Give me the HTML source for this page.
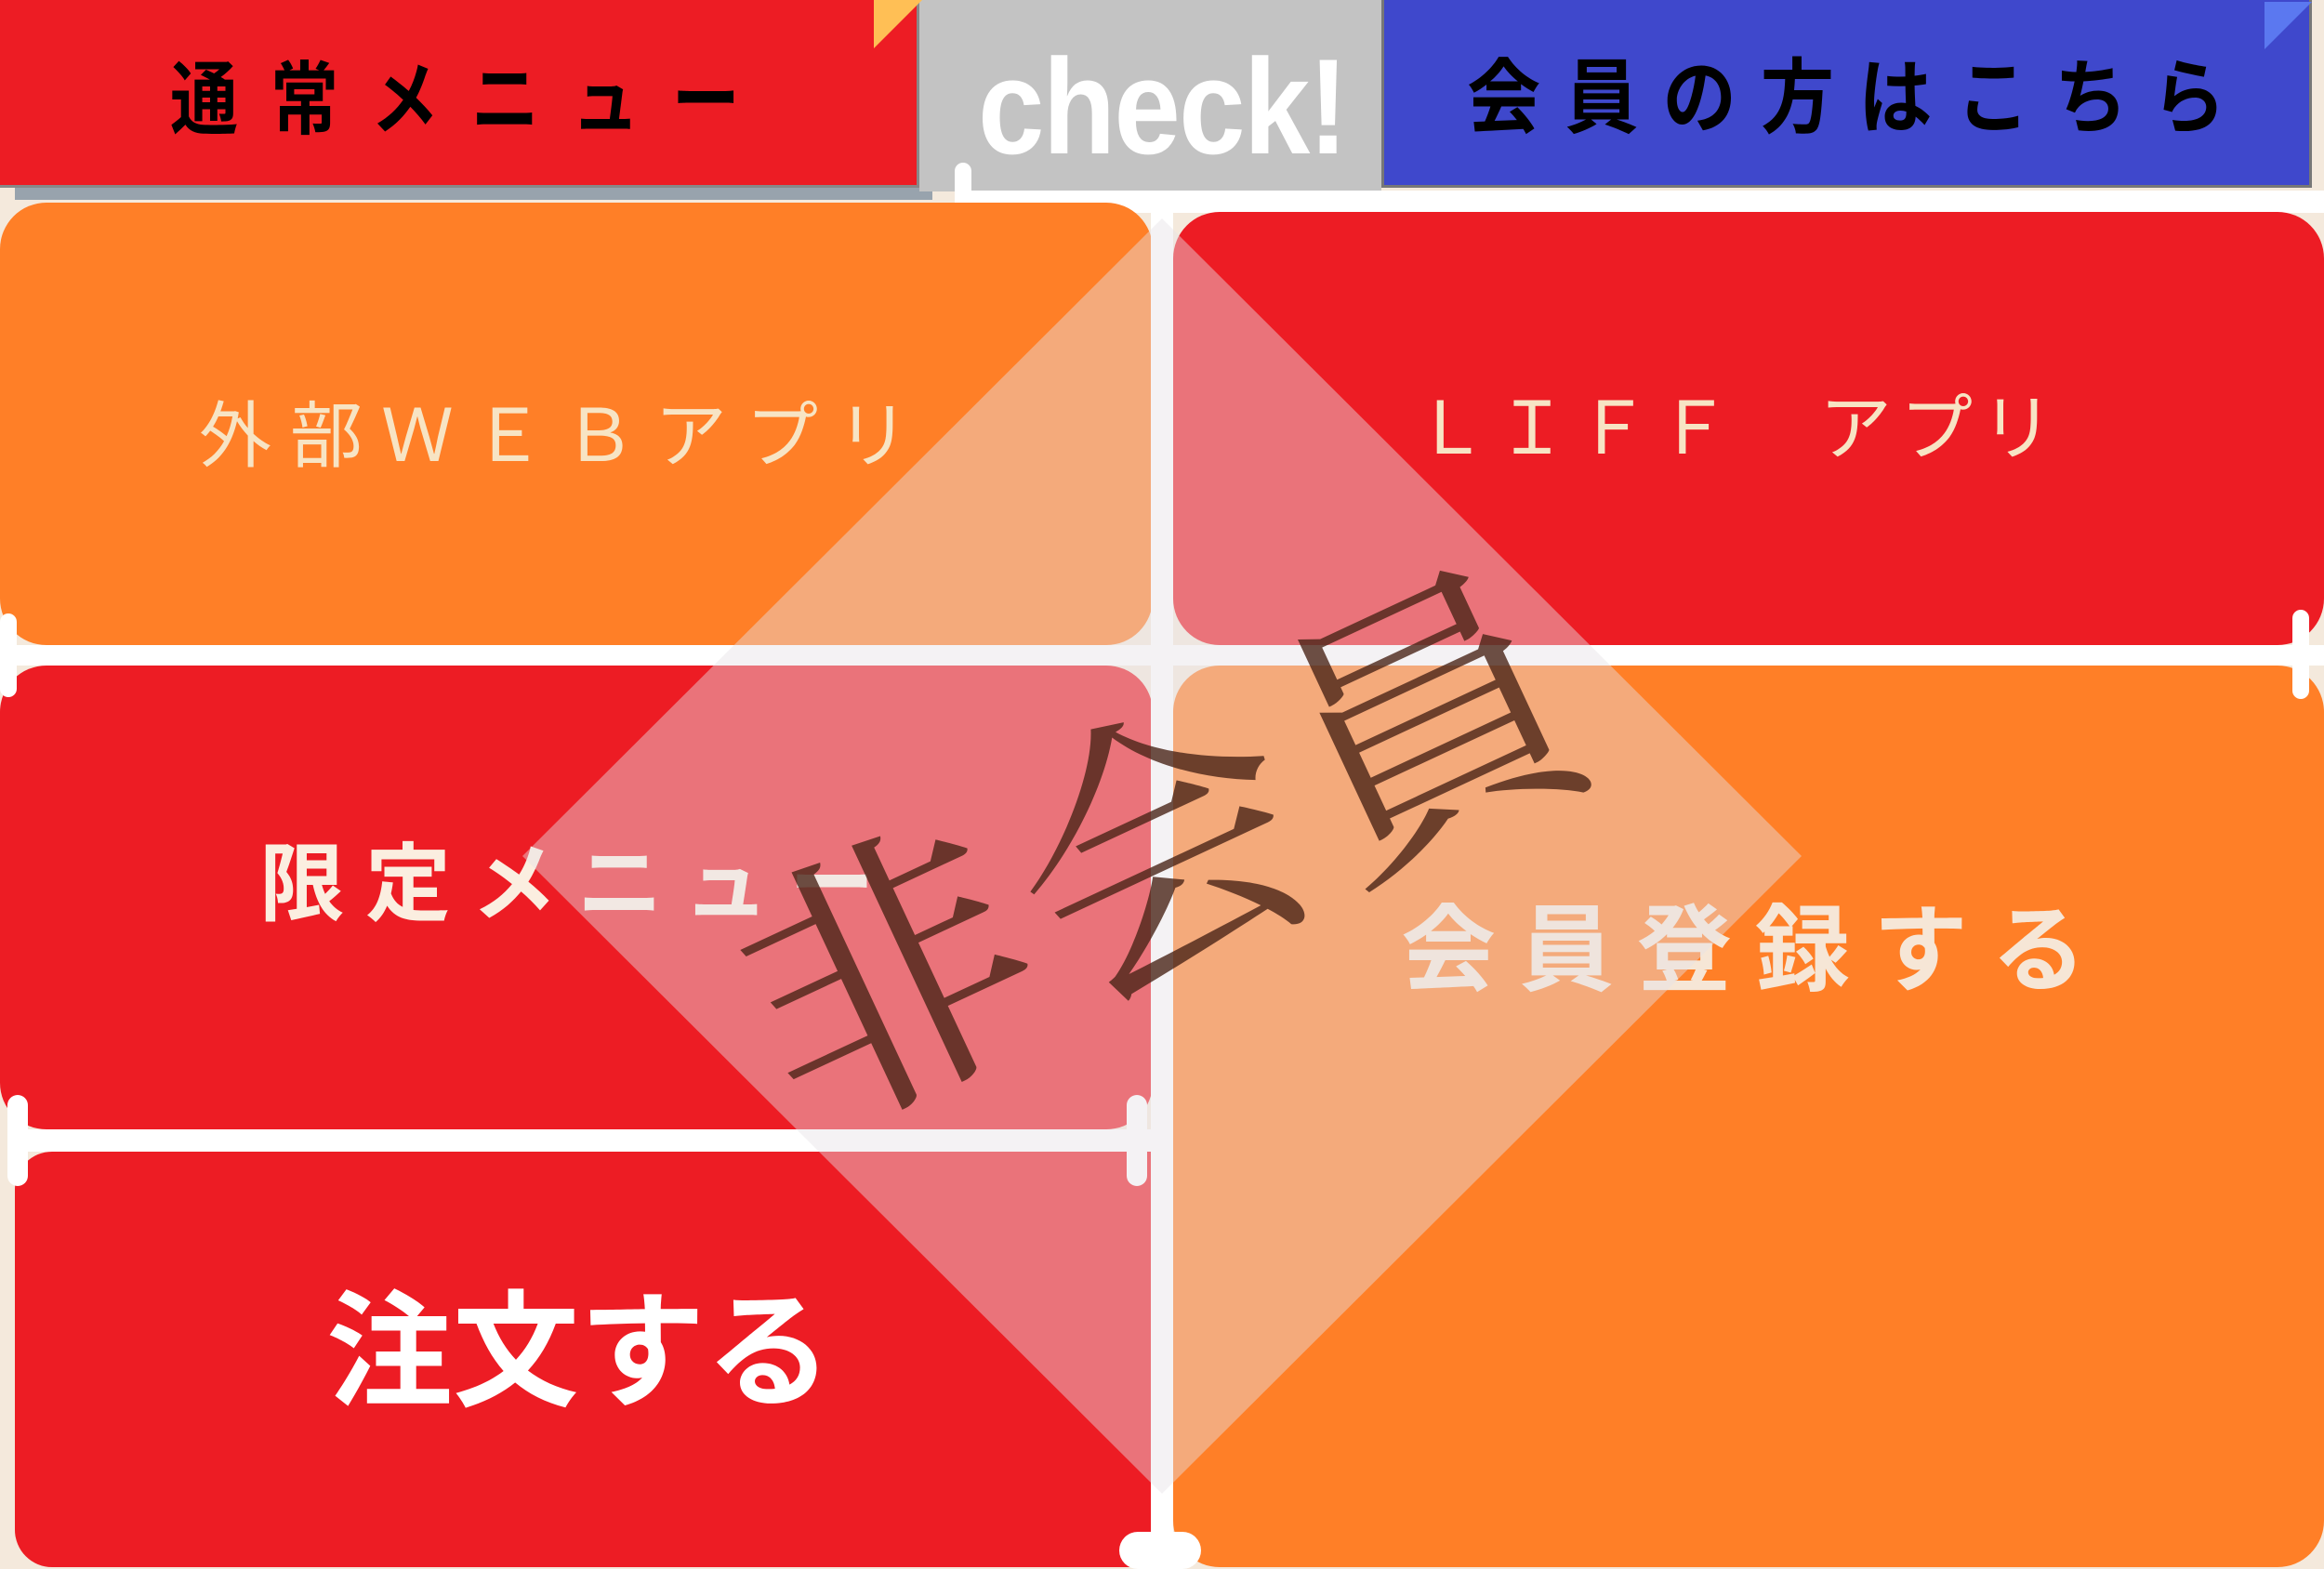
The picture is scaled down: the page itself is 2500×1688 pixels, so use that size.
<!DOCTYPE html>
<html><head><meta charset="utf-8"><style>
html,body{margin:0;padding:0}
body{width:2500px;height:1686px;position:relative;overflow:hidden;background:#f4e9dc;font-family:"Liberation Sans","Noto Sans CJK JP",sans-serif}
.a{position:absolute}
.t{position:absolute;white-space:nowrap;line-height:1}
</style></head><body>
<!-- top tabs -->
<div class="a" style="left:16px;top:12px;width:987px;height:203px;background:#98a3ad"></div>
<div class="a" style="left:989px;top:0;width:497px;height:206px;background:#c3c3c3"></div>
<div class="a" style="left:0;top:0;width:989px;height:202px;background:#ed1c24;border-right:3px solid #888;border-bottom:3px solid #888;box-sizing:border-box"></div>
<div class="a" style="left:940px;top:0;width:0;height:0;border-left:52px solid #ffbf55;border-bottom:52px solid transparent"></div>
<div class="a" style="left:1486px;top:0;width:1001px;height:202px;background:#3f48cc;border:3px solid #777;border-top:0;box-sizing:border-box"></div>
<div class="a" style="left:2436px;top:2px;width:0;height:0;border-left:51px solid #5b78f0;border-bottom:51px solid transparent"></div>
<div class="t" style="left:1052px;top:42px;font-size:146px;font-weight:bold;color:#fff;transform:scaleX(.88);transform-origin:left top;letter-spacing:-2px">check!</div>
<div class="t" style="left:183px;top:65px;font-size:86px;font-weight:bold;color:#000;letter-spacing:41px;transform:scaleX(.85);transform-origin:left top">通常メニュー</div>
<div class="t" style="left:1578px;top:62px;font-size:88px;font-weight:bold;color:#000;letter-spacing:29px;transform:scaleX(.9);transform-origin:left top">会員の方はこちら</div>
<!-- white lines -->
<div class="a" style="left:1036px;top:205px;width:1464px;height:24px;background:#fff"></div>
<div class="a" style="left:1027px;top:175px;width:18px;height:90px;background:#fff;border-radius:9px"></div>
<!-- tiles -->
<div class="a" style="left:0;top:218px;width:1240px;height:476px;background:#ff7f27;border-radius:50px"></div>
<div class="a" style="left:1262px;top:228px;width:1238px;height:466px;background:#ed1c24;border-radius:50px"></div>
<div class="a" style="left:0;top:716px;width:1240px;height:499px;background:#ed1c24;border-radius:50px"></div>
<div class="a" style="left:16px;top:1239px;width:1224px;height:447px;background:#ed1c24;border-radius:40px 0 0 40px"></div>
<div class="a" style="left:1262px;top:716px;width:1238px;height:970px;background:#ff7f27;border-radius:50px 50px 50px 50px"></div>
<div class="a" style="left:0;top:694px;width:2500px;height:22px;background:#fff"></div>
<div class="a" style="left:0;top:660px;width:18px;height:90px;background:#fff;border-radius:9px"></div>
<div class="a" style="left:2466px;top:656px;width:18px;height:96px;background:#fff;border-radius:9px"></div>
<div class="a" style="left:16px;top:1215px;width:1224px;height:24px;background:#fff"></div>
<div class="a" style="left:8px;top:1178px;width:22px;height:98px;background:#fff;border-radius:11px"></div>
<div class="a" style="left:1212px;top:1178px;width:22px;height:98px;background:#fff;border-radius:11px"></div>
<div class="a" style="left:1238px;top:228px;width:24px;height:1458px;background:#fff"></div>
<div class="a" style="left:1204px;top:1648px;width:88px;height:40px;background:#fff;border-radius:20px"></div>
<!-- tile texts -->
<div class="t" style="left:214px;top:430px;font-size:78px;color:#f7e4c4;letter-spacing:20px">外部ＷＥＢアプリ</div>
<div class="t" style="left:1522px;top:422px;font-size:78px;color:#f7e4c4;letter-spacing:9px">ＬＩＦＦ　アプリ</div>
<div class="t" style="left:279px;top:906px;font-size:92px;font-weight:bold;color:#fbeee0;letter-spacing:22px">限定メニュー</div>
<div class="t" style="left:1507px;top:972px;font-size:102px;font-weight:bold;color:#f6e6d6;letter-spacing:25px">会員登録する</div>
<div class="t" style="left:351px;top:1387px;font-size:136px;font-weight:bold;color:#fff">注文する</div>
<!-- diamond & watermark -->
<svg class="a" style="left:0;top:0" width="2500" height="1686">
<polygon points="1250,235 1938,921 1250,1607 562,921" fill="#e6e2e6" fill-opacity="0.444"/>
<text x="1254" y="1024" text-anchor="middle" font-family="Noto Serif CJK SC, serif" font-size="310" fill="#4a2418" fill-opacity="0.8" transform="rotate(-25 1254 917)" letter-spacing="12">非会員</text>
</svg>
</body></html>
